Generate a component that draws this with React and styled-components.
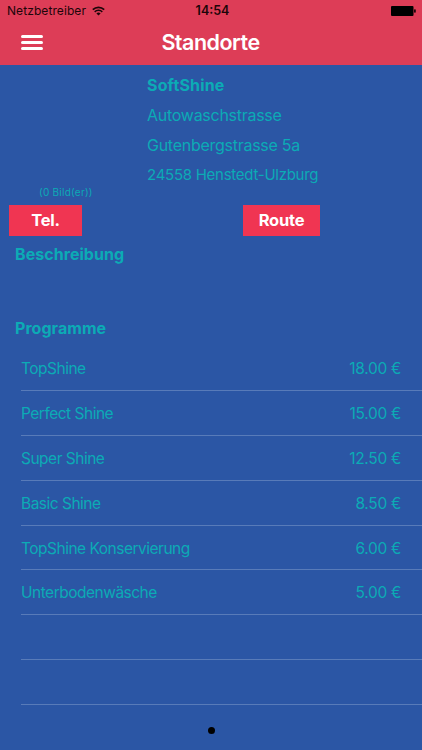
import React from "react";
import styled, { createGlobalStyle } from "styled-components";

const GlobalStyle = createGlobalStyle`
  * {
    box-sizing: border-box;
  }

  body {
    margin: 0;
    font-family: Inter, "Liberation Sans", sans-serif;
    background-color: #2b56a5;
  }
`;

const Screen = styled.div`
  display: flex;
  flex-direction: column;
  width: 422px;
  height: 750px;
  overflow: hidden;
  background-color: #2b56a5;
  color: #0cabb5;
`;

const Header = styled.header`
  height: 65px;
  flex: none;
  background-color: #dd3d57;
`;

const StatusBar = styled.div`
  display: grid;
  grid-template-columns: 1fr auto 1fr;
  align-items: center;
  height: 22px;
  padding: 0 6px 0 7px;
  color: #1c0509;
`;

const Carrier = styled.div`
  display: flex;
  align-items: center;
  gap: 6px;
  font-size: 12px;
  line-height: 22px;
  letter-spacing: 0.08px;
`;

const Clock = styled.div`
  padding-left: 2px;
  font-size: 12.5px;
  font-weight: 600;
  line-height: 22px;
`;

const Battery = styled.svg`
  justify-self: end;
`;

const NavBar = styled.div`
  display: grid;
  grid-template-columns: 1fr auto 1fr;
  align-items: center;
  height: 40px;
  padding: 0 22px 0 21px;
`;

const MenuButton = styled.button`
  display: flex;
  flex-direction: column;
  gap: 3px;
  width: 22px;
  padding: 0;
  border: none;
  background: none;
`;

const MenuLine = styled.span`
  height: 3px;
  border-radius: 1.5px;
  background-color: white;
`;

const Title = styled.h1`
  margin: 0;
  font-size: 21.5px;
  font-weight: 600;
  line-height: 40px;
  letter-spacing: -0.5px;
  color: white;
`;

const Info = styled.section`
  display: flex;
  flex: none;
  height: 140px;
  padding-top: 6px;
`;

const Pictures = styled.div`
  display: flex;
  align-items: flex-end;
  width: 147px;
  padding: 0 0 6px 39px;
  font-size: 10px;
  line-height: 14px;
  letter-spacing: 0.25px;
`;

const Address = styled.div`
  flex: 1;
`;

const AddressLine = styled.div`
  height: 29.8px;
  line-height: 29.8px;
  font-size: ${({ $size }) => $size || 16}px;
  font-weight: ${({ $bold }) => ($bold ? 700 : 400)};
  letter-spacing: ${({ $bold }) => ($bold ? 0.15 : -0.27)}px;
  white-space: nowrap;
`;

const Actions = styled.div`
  display: flex;
  flex: none;
  gap: 161px;
  padding-left: 9px;
`;

const ActionButton = styled.button`
  width: ${({ $width }) => $width}px;
  height: 31px;
  padding: 0 0 1px;
  border: none;
  background-color: #f03552;
  color: white;
  font-family: inherit;
  font-size: 16.5px;
  font-weight: 700;
  letter-spacing: -0.2px;
`;

const SectionTitle = styled.h2`
  flex: none;
  height: ${({ $height }) => $height}px;
  margin: 0;
  padding-left: 15px;
  font-size: 16px;
  font-weight: 700;
  line-height: 37px;
  letter-spacing: 0.05px;
`;

const PriceList = styled.ul`
  flex: none;
  margin: 0;
  padding: 0 0 0 21px;
  list-style: none;
`;

const PriceRow = styled.li`
  display: flex;
  justify-content: space-between;
  height: 44.8px;
  padding-right: 21px;
  border-bottom: 1px solid #587bb9;
  font-size: 15.5px;
  line-height: 46px;
  letter-spacing: -0.5px;
`;

const Price = styled.span`
  letter-spacing: -0.3px;
`;

const Pager = styled.div`
  display: flex;
  flex: 1;
  align-items: center;
  justify-content: center;
  padding-top: 7px;
`;

const PagerDot = styled.span`
  width: 7px;
  height: 7px;
  border-radius: 50%;
  background-color: black;
`;

const programs = [
  { name: "TopShine", price: "18.00 €" },
  { name: "Perfect Shine", price: "15.00 €" },
  { name: "Super Shine", price: "12.50 €" },
  { name: "Basic Shine", price: "8.50 €" },
  { name: "TopShine Konservierung", price: "6.00 €" },
  { name: "Unterbodenwäsche", price: "5.00 €" },
  { name: "", price: "" },
  { name: "", price: "" },
];

function WifiIcon() {
  return (
    <svg width="13" height="10" viewBox="0 0 13 10" fill="none">
      <path d="M0.8 3.6a8.2 8.2 0 0 1 11.4 0" stroke="#1c0509" strokeWidth="1.7" />
      <path d="M2.7 5.9a5.4 5.4 0 0 1 7.6 0" stroke="#1c0509" strokeWidth="1.5" />
      <path d="M4.4 7.5a3 3 0 0 1 4.2 0L6.5 9.6z" fill="#1c0509" />
    </svg>
  );
}

export default function App() {
  return (
    <>
      <GlobalStyle />
      <Screen>
        <Header>
          <StatusBar>
            <Carrier>
              <span>Netzbetreiber</span>
              <WifiIcon />
            </Carrier>
            <Clock>14:54</Clock>
            <Battery width="25" height="10" viewBox="0 0 25 10">
              <rect width="22.5" height="10" rx="1" fill="black" />
              <rect x="23" y="3.3" width="1.8" height="3.4" rx="0.8" fill="#1c0509" />
            </Battery>
          </StatusBar>
          <NavBar>
            <MenuButton aria-label="Menü">
              <MenuLine />
              <MenuLine />
              <MenuLine />
            </MenuButton>
            <Title>Standorte</Title>
          </NavBar>
        </Header>

        <Info>
          <Pictures>(0 Bild(er))</Pictures>
          <Address>
            <AddressLine $bold>SoftShine</AddressLine>
            <AddressLine>Autowaschstrasse</AddressLine>
            <AddressLine>Gutenbergstrasse 5a</AddressLine>
            <AddressLine $size={15}>24558 Henstedt-Ulzburg</AddressLine>
          </Address>
        </Info>

        <Actions>
          <ActionButton $width={73}>Tel.</ActionButton>
          <ActionButton $width={77}>Route</ActionButton>
        </Actions>

        <SectionTitle $height={74}>Beschreibung</SectionTitle>
        <SectionTitle $height={36.4}>Programme</SectionTitle>

        <PriceList>
          {programs.map(({ name, price }, index) => (
            <PriceRow key={index}>
              <span>{name}</span>
              <Price>{price}</Price>
            </PriceRow>
          ))}
        </PriceList>

        <Pager>
          <PagerDot />
        </Pager>
      </Screen>
    </>
  );
}
